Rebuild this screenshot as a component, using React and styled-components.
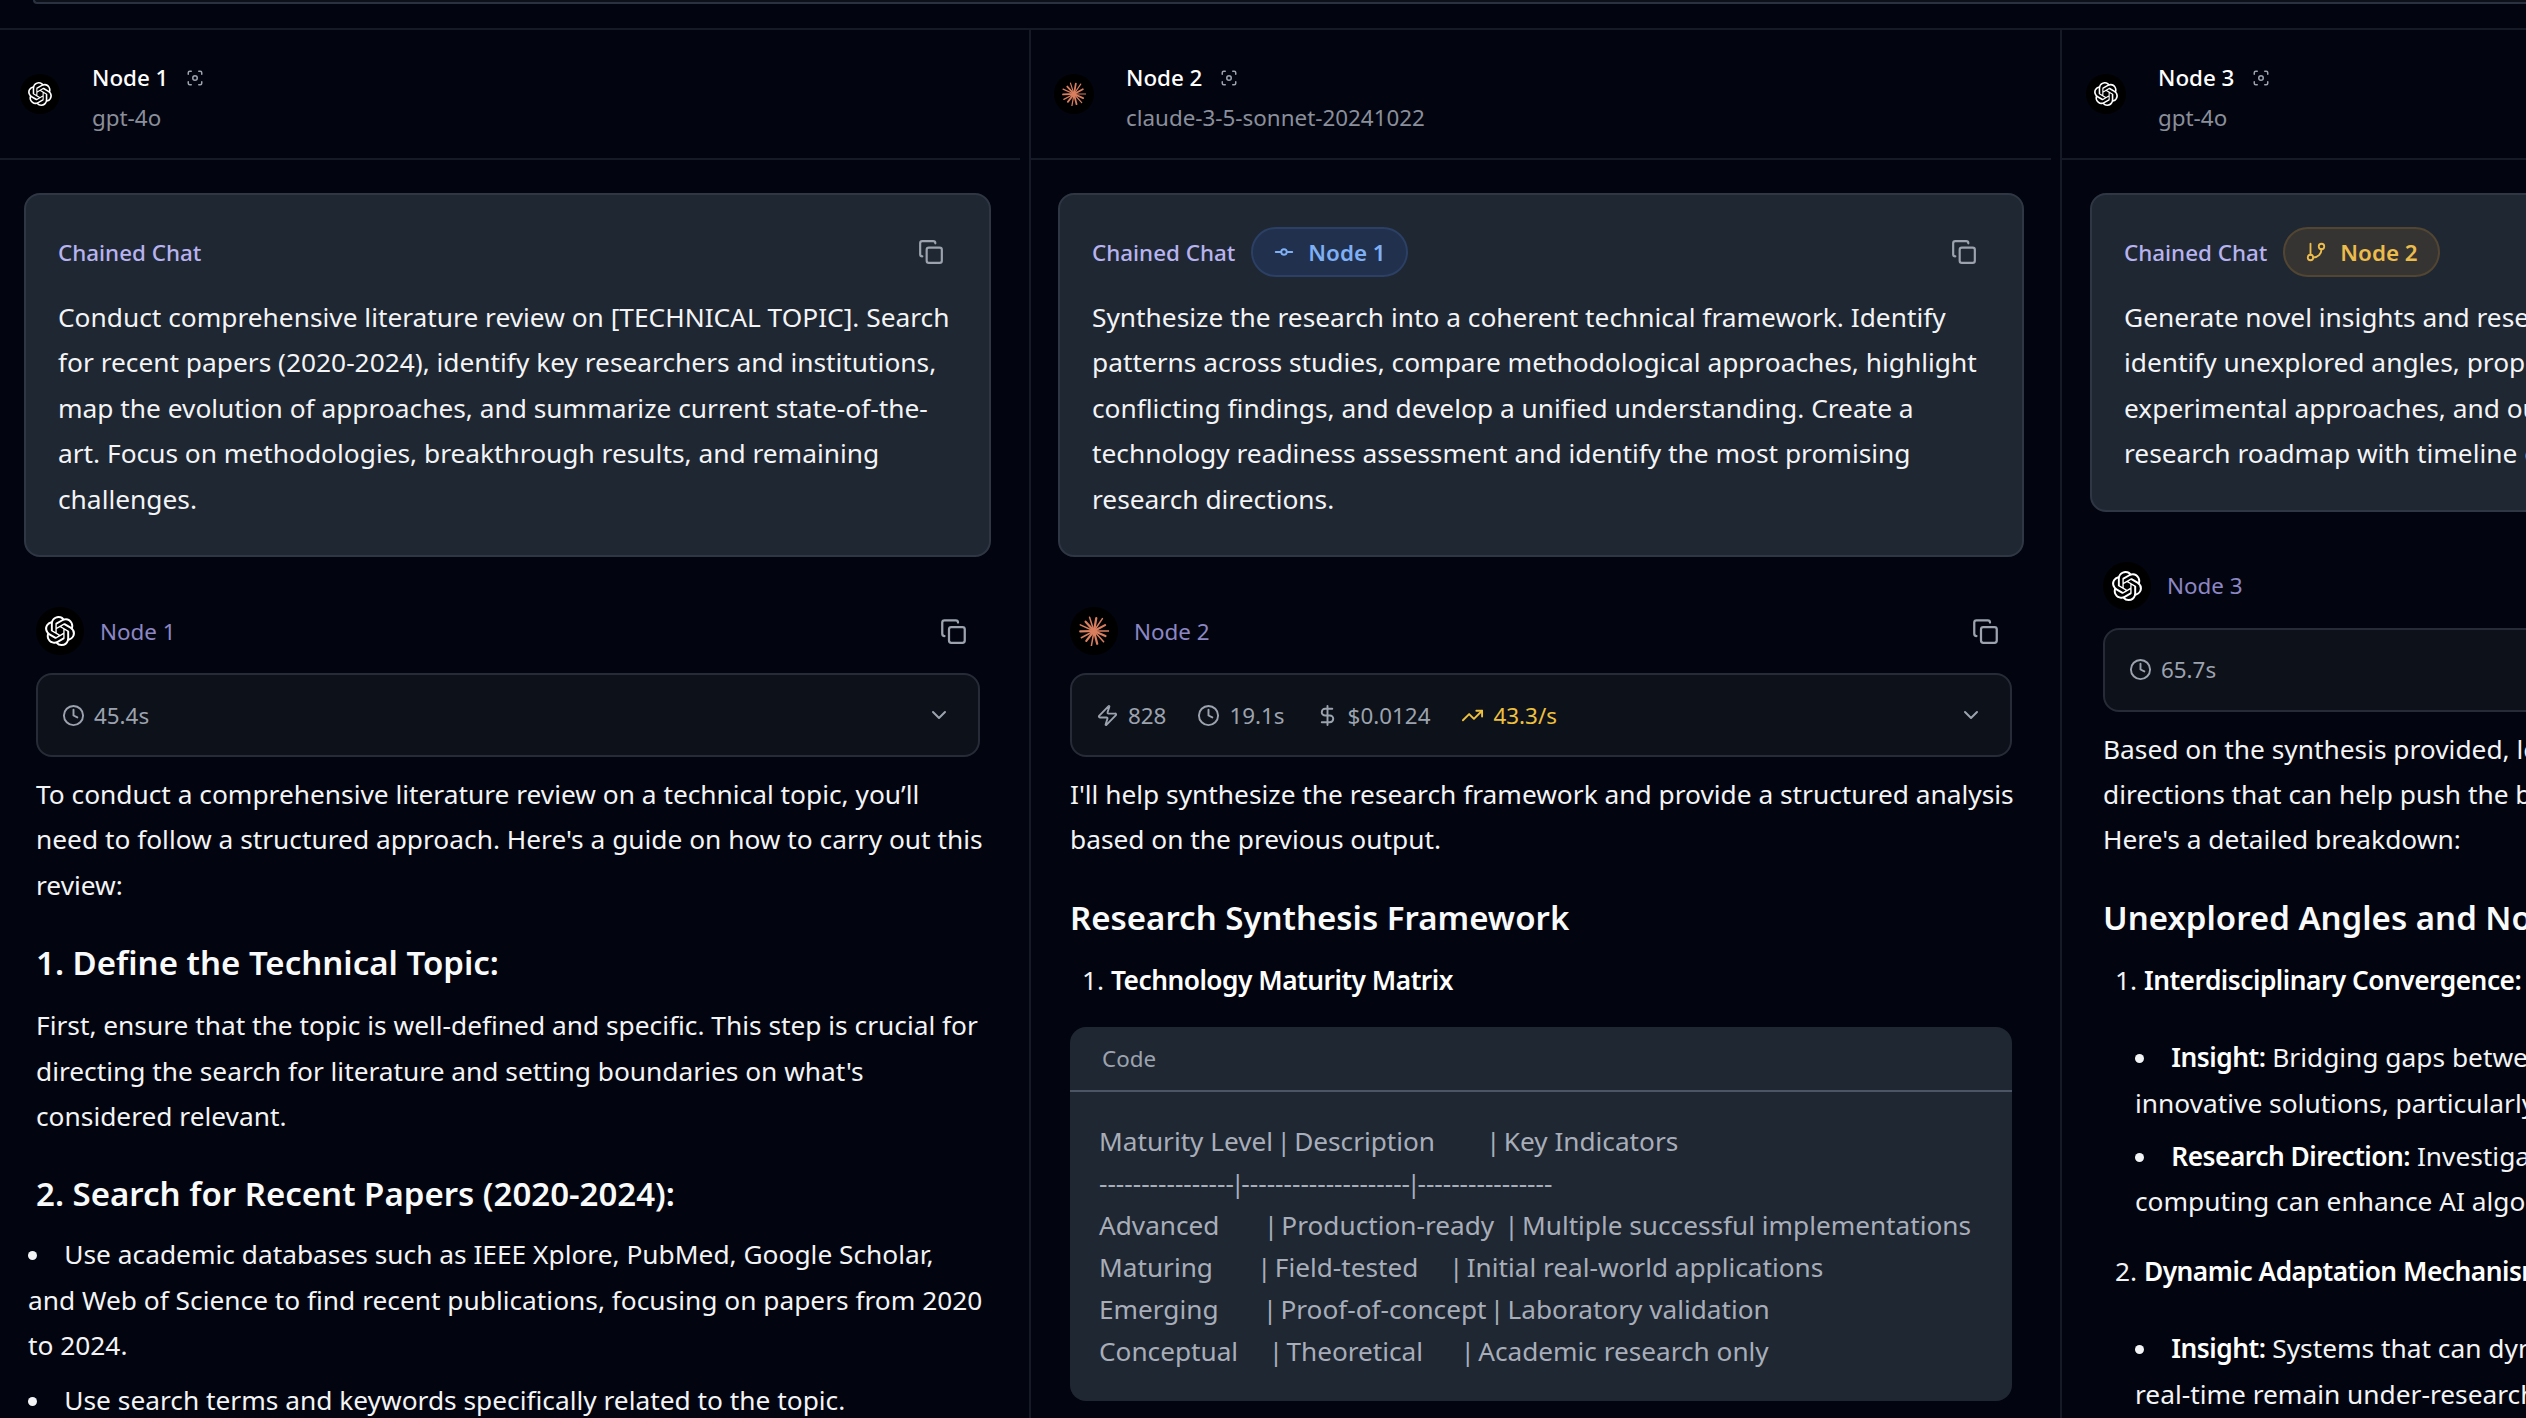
import React from "react";
import styled, { createGlobalStyle } from "styled-components";
import { Focus, Copy, Clock, Zap, DollarSign, TrendingUp, ChevronDown, GitCommitHorizontal, GitBranch } from "lucide-react";
import { SiOpenai } from "react-icons/si";

const Global = createGlobalStyle`
  html, body { margin: 0; padding: 0; background: #020510; }
  body { font-family: "Noto Sans", sans-serif; color: #f3f4f6; }
  #root { width: 2526px; height: 1418px; overflow: hidden; }
  * { box-sizing: border-box; }
`;

const Page = styled.div`
  width: 2526px;
  height: 1418px;
  overflow: hidden;
  display: flex;
  flex-direction: column;
  background: #020510;
`;
const TopBar = styled.div`
  flex: 0 0 30px;
  border-bottom: 2px solid #151a26;
`;
const TopCard = styled.div`
  height: 4px;
  margin-left: 33px;
  border: 2px solid #2a3140;
  border-top: 0;
  border-right: 0;
  border-bottom-left-radius: 10px;
  background: #0d1119;
`;
const Columns = styled.div`
  flex: 1;
  display: flex;
  overflow: hidden;
`;
const Column = styled.section`
  flex: 0 0 ${(p) => p.$width}px;
  height: 100%;
  overflow: hidden;
  border-right: 2px solid #151a26;
`;
const NodeHeader = styled.header`
  height: 130px;
  margin-right: 9px;
  padding-left: ${(p) => p.$left}px;
  display: flex;
  align-items: center;
  gap: 32px;
  border-bottom: 2px solid #151a26;
`;
const Avatar = styled.div`
  flex: none;
  width: ${(p) => p.$size}px;
  height: ${(p) => p.$size}px;
  border-radius: 50%;
  background: #000;
  display: flex;
  align-items: center;
  justify-content: center;
  color: #fff;
`;
const NodeInfo = styled.div`
  display: flex;
  flex-direction: column;
  gap: 10px;
  margin-top: 7px;
`;
const NodeTitle = styled.div`
  display: flex;
  align-items: center;
  gap: 18px;
  font-size: 22.4px;
  line-height: 30px;
  font-weight: 500;
  color: #fff;
  svg { color: #9ca3af; }
`;
const ModelName = styled.div`
  font-size: 22.4px;
  line-height: 30px;
  color: #8a8f9b;
`;
const Body = styled.div`
  padding: 33px ${(p) => p.$right}px 0 ${(p) => p.$left}px;
`;
const PromptCard = styled.div`
  background: #1f2733;
  border: 2px solid #2f3744;
  border-radius: 16px;
  padding: 32px 32px 33px;
`;
const PromptHead = styled.div`
  height: 50px;
  display: flex;
  align-items: center;
  gap: 16px;
  margin-bottom: 18px;
`;
const ChainLabel = styled.span`
  font-size: 22.4px;
  color: #b7b3ef;
  font-weight: 500;
`;
const Badge = styled.span`
  height: 50px;
  padding: 0 20px;
  display: inline-flex;
  align-items: center;
  gap: 13px;
  border-radius: 25px;
  font-size: 22.4px;
  font-weight: 600;
  color: ${(p) => (p.$tone === "blue" ? "#7fb0f5" : "#ecbc4c")};
  background: ${(p) => (p.$tone === "blue" ? "#20304d" : "#353432")};
  border: 2px solid ${(p) => (p.$tone === "blue" ? "#2b4064" : "#524632")};
`;
const CopyBtn = styled.span`
  margin-left: auto;
  margin-right: 13px;
  display: flex;
  color: #9ca3af;
`;
const PromptText = styled.p`
  margin: 0;
  font-size: 26.3px;
  line-height: 45.4px;
  color: #f3f4f6;
`;
const Message = styled.div`
  padding: 50px ${(p) => p.$right}px 0 ${(p) => p.$left}px;
`;
const MessageHead = styled.div`
  height: 48px;
  display: flex;
  align-items: center;
  gap: 16px;
  margin-bottom: 18px;
`;
const MessageName = styled.span`
  font-size: 22.4px;
  color: #8d87c4;
`;
const Stats = styled.div`
  height: 84px;
  padding: 0 24px;
  display: flex;
  align-items: center;
  gap: 31px;
  background: #0d1119;
  border: 2px solid #262b37;
  border-radius: 16px;
  margin-bottom: 15px;
  font-size: 22.4px;
  color: #9ca3af;
`;
const Stat = styled.span`
  display: inline-flex;
  align-items: center;
  gap: 9px;
  color: ${(p) => (p.$accent ? "#eec03f" : "#9ca3af")};
`;
const Chevron = styled.span`
  margin-left: auto;
  margin-right: 3px;
  display: flex;
`;
const Para = styled.p`
  margin: 0 -7px 0 0;
  font-size: 26.3px;
  line-height: 45.4px;
  color: #f3f4f6;
`;
const Heading = styled.h3`
  margin: 32px 0 17px;
  font-size: 33px;
  line-height: 46px;
  font-weight: 600;
  color: #f9fafb;
`;
const Bullets = styled.ul`
  margin: -2px -7px 0 -8px;
  padding: 0;
  list-style: disc inside;
  font-size: 26.3px;
  line-height: 45.4px;
`;
const BulletItem = styled.li`
  margin-bottom: 9px;
`;
const Numbered = styled.ol`
  margin: 0;
  padding: 0 0 0 12px;
  font-size: 26.3px;
  line-height: 45.4px;
  list-style: decimal inside;
`;
const NumberedItem = styled.li`
  margin-bottom: 24px;
`;
const SubBullets = styled.ul`
  margin: 32px 0 0 20px;
  padding: 0;
  list-style: disc inside;
`;
const SubItem = styled.li`
  margin-bottom: 8px;
`;
const Strong = styled.strong`
  font-weight: 600;
  letter-spacing: -0.5px;
  color: #fff;
`;
const CodeBlock = styled.div`
  background: #1f2733;
  border-radius: 16px;
  overflow: hidden;
  height: 374px;
`;
const CodeHead = styled.div`
  height: 65px;
  padding: 0 32px;
  display: flex;
  align-items: center;
  font-size: 22.4px;
  color: #9ca3af;
  border-bottom: 2px solid #4b5563;
`;
const CodeBody = styled.pre`
  margin: 0;
  padding: 28px 29px 0;
  font-family: "Noto Sans", sans-serif;
  font-size: 26.2px;
  line-height: 42px;
  color: #a8aeb9;
  white-space: pre;
`;
const Pipe = styled.span`
  margin: 0 -3.5px;
`;

const rays = [
  [0, 24], [24, 20], [48, 23], [76, 21], [100, 24], [128, 20], [152, 23], [178, 22],
  [204, 24], [228, 20], [252, 23], [280, 21], [304, 24], [332, 20],
];
const Starburst = ({ size }) => (
  <svg width={size} height={size} viewBox="0 0 48 48" fill="none" stroke="#d97f5f" strokeLinecap="round">
    {rays.map(([a, r], i) => (
      <line
        key={i}
        x1="24"
        y1="24"
        x2={24 + r * Math.cos((a * Math.PI) / 180)}
        y2={24 + r * Math.sin((a * Math.PI) / 180)}
        strokeWidth={i % 2 ? 3.6 : 2.4}
      />
    ))}
  </svg>
);

const Logo = ({ kind, size }) =>
  kind === "claude" ? <Starburst size={size} /> : <SiOpenai size={size} />;

const CODE = [
  ["Maturity Level ", " Description        ", " Key Indicators"],
  ["----------------", "--------------------", "----------------"],
  ["Advanced       ", " Production-ready  ", " Multiple successful implementations"],
  ["Maturing       ", " Field-tested     ", " Initial real-world applications"],
  ["Emerging       ", " Proof-of-concept ", " Laboratory validation"],
  ["Conceptual     ", " Theoretical      ", " Academic research only"],
];

const NodeColumn = ({ width, headLeft, bodyLeft, bodyRight, msgLeft, msgRight, name, model, kind, prompt, badge, stats, children }) => (
  <Column $width={width}>
    <NodeHeader $left={headLeft}>
      <Avatar $size={40}><Logo kind={kind} size={24} /></Avatar>
      <NodeInfo>
        <NodeTitle>{name}<Focus size={18} /></NodeTitle>
        <ModelName>{model}</ModelName>
      </NodeInfo>
    </NodeHeader>
    <Body $left={bodyLeft} $right={bodyRight}>
      <PromptCard>
        <PromptHead>
          <ChainLabel>Chained Chat</ChainLabel>
          {badge}
          <CopyBtn><Copy size={26} /></CopyBtn>
        </PromptHead>
        <PromptText>{prompt}</PromptText>
      </PromptCard>
    </Body>
    <Message $left={msgLeft} $right={msgRight}>
      <MessageHead>
        <Avatar $size={48}><Logo kind={kind} size={30} /></Avatar>
        <MessageName>{name}</MessageName>
        <CopyBtn><Copy size={27} /></CopyBtn>
      </MessageHead>
      <Stats>
        {stats}
        <Chevron><ChevronDown size={24} /></Chevron>
      </Stats>
      {children}
    </Message>
  </Column>
);

export default function App() {
  return (
    <Page>
      <Global />
      <TopBar><TopCard /></TopBar>
      <Columns>
        <NodeColumn
          width={1031}
          headLeft={20}
          bodyLeft={24}
          bodyRight={38}
          msgLeft={36}
          msgRight={49}
          name="Node 1"
          model="gpt-4o"
          kind="openai"
          prompt="Conduct comprehensive literature review on [TECHNICAL TOPIC]. Search for recent papers (2020-2024), identify key researchers and institutions, map the evolution of approaches, and summarize current state-of-the-art. Focus on methodologies, breakthrough results, and remaining challenges."
          stats={<Stat><Clock size={23} />45.4s</Stat>}
        >
          <Para>To conduct a comprehensive literature review on a technical topic, you’ll need to follow a structured approach. Here's a guide on how to carry out this review:</Para>
          <Heading>1. Define the Technical Topic:</Heading>
          <Para>First, ensure that the topic is well-defined and specific. This step is crucial for directing the search for literature and setting boundaries on what's considered relevant.</Para>
          <Heading>2. Search for Recent Papers (2020-2024):</Heading>
          <Bullets>
            <BulletItem>Use academic databases such as IEEE Xplore, PubMed, Google Scholar, and Web of Science to find recent publications, focusing on papers from 2020 to 2024.</BulletItem>
            <BulletItem>Use search terms and keywords specifically related to the topic.</BulletItem>
          </Bullets>
        </NodeColumn>
        <NodeColumn
          width={1031}
          headLeft={23}
          bodyLeft={27}
          bodyRight={36}
          msgLeft={39}
          msgRight={48}
          name="Node 2"
          model="claude-3-5-sonnet-20241022"
          kind="claude"
          prompt="Synthesize the research into a coherent technical framework. Identify patterns across studies, compare methodological approaches, highlight conflicting findings, and develop a unified understanding. Create a technology readiness assessment and identify the most promising research directions."
          badge={<Badge $tone="blue"><GitCommitHorizontal size={22} />Node 1</Badge>}
          stats={
            <>
              <Stat><Zap size={23} />828</Stat>
              <Stat><Clock size={23} />19.1s</Stat>
              <Stat><DollarSign size={23} />$0.0124</Stat>
              <Stat $accent><TrendingUp size={23} />43.3/s</Stat>
            </>
          }
        >
          <Para>I'll help synthesize the research framework and provide a structured analysis based on the previous output.</Para>
          <Heading>Research Synthesis Framework</Heading>
          <Numbered>
            <NumberedItem>
              <Strong>Technology Maturity Matrix</Strong>
            </NumberedItem>
          </Numbered>
          <CodeBlock>
            <CodeHead>Code</CodeHead>
            <CodeBody>
              {CODE.map((cells, i) => (
                <div key={i}>
                  {cells[0]}<Pipe>|</Pipe>{cells[1]}<Pipe>|</Pipe>{cells[2]}
                </div>
              ))}
            </CodeBody>
          </CodeBlock>
        </NodeColumn>
        <NodeColumn
          width={1031}
          headLeft={24}
          bodyLeft={28}
          bodyRight={36}
          msgLeft={41}
          msgRight={47}
          name="Node 3"
          model="gpt-4o"
          kind="openai"
          prompt="Generate novel insights and research directions from the framework: identify unexplored angles, propose cross-domain hypotheses, suggest experimental approaches, and outline a practical and staged plan. Add a research roadmap with timeline estimates."
          badge={<Badge $tone="amber"><GitBranch size={22} />Node 2</Badge>}
          stats={<Stat><Clock size={23} />65.7s</Stat>}
        >
          <Para>Based on the synthesis provided, let's explore some novel research directions that can help push the boundaries of the technical field today. Here's a detailed breakdown:</Para>
          <Heading>Unexplored Angles and Novel Insights</Heading>
          <Numbered>
            <NumberedItem>
              <Strong>Interdisciplinary Convergence:</Strong>
              <SubBullets>
                <SubItem><Strong>Insight:</Strong> Bridging gaps between different fields can often yield innovative solutions, particularly across emerging domains.</SubItem>
                <SubItem><Strong>Research Direction:</Strong> Investigate how neuromorphic or quantum computing can enhance AI algorithms and their training.</SubItem>
              </SubBullets>
            </NumberedItem>
            <NumberedItem>
              <Strong>Dynamic Adaptation Mechanisms:</Strong>
              <SubBullets>
                <SubItem><Strong>Insight:</Strong> Systems that can dynamically adapt to changing conditions in real-time remain under-researched across the field.</SubItem>
              </SubBullets>
            </NumberedItem>
          </Numbered>
        </NodeColumn>
      </Columns>
    </Page>
  );
}
